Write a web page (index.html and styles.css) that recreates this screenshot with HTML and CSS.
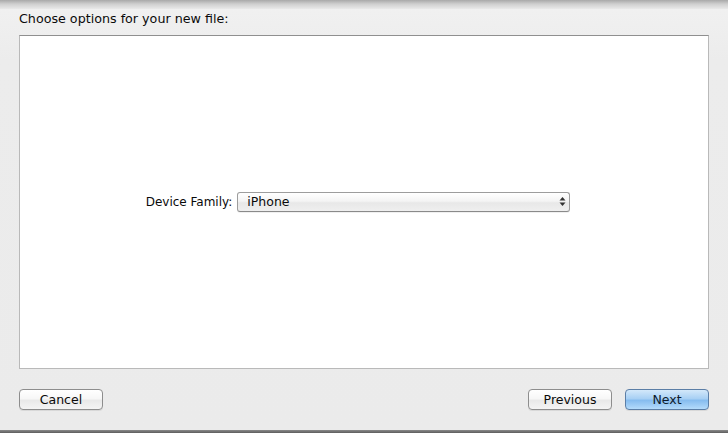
FILE: index.html
```html
<!DOCTYPE html>
<html lang="en">
<head>
    <meta charset="UTF-8">
    <title>Choose options</title>
    <link rel="stylesheet" href="styles.css">
</head>
<body>
<div class="sheet">
    <div class="sheet-shadow"></div>
    <h1 class="title">Choose options for your new file:</h1>
    <main class="panel">
        <form class="options" onsubmit="return false">
            <label for="device_family">Device Family:</label>
            <div class="popup">
                <select id="device_family" name="device_family">
                    <option>iPhone</option>
                    <option>iPad</option>
                    <option>Universal</option>
                </select>
                <span class="stepper">
                    <svg width="7" height="11" viewBox="0 0 7 11">
                        <path d="M3.5 1 L6.5 4.5 L0.5 4.5 Z" fill="#333"/>
                        <path d="M3.5 10 L6.5 6.5 L0.5 6.5 Z" fill="#333"/>
                    </svg>
                </span>
            </div>
        </form>
    </main>
    <footer class="buttons">
        <button class="btn">Cancel</button>
        <span class="spacer"></span>
        <button class="btn">Previous</button>
        <button class="btn btn-default">Next</button>
    </footer>
    <div class="window-edge"></div>
</div>
</body>
</html>
```

FILE: styles.css
```css
html {
    background-color: #ececec;
    color: #111;
    font-family: "DejaVu Sans", "Liberation Sans", sans-serif;
    font-size: 12px;
    height: 100%;
}

body {
    margin: 0;
    height: 100%;
}

.sheet {
    display: flex;
    flex-direction: column;
    height: 433px;
    background: linear-gradient(to bottom, #f1f1f1 0, #ececec 60px, #ebebeb 100%);
}

.sheet-shadow {
    height: 9px;
    flex: none;
    background: linear-gradient(to bottom, #a9a9a9 0, #cfcfcf 4px, #e9e9e9 9px);
}

.title {
    margin: 3px 0 0 19px;
    height: 23px;
    font-size: 12.7px;
    font-weight: normal;
    line-height: 14px;
    color: #0a0a0a;
}

.panel {
    height: 332px;
    margin: 0 19px;
    background: white;
    border: 1px solid #b9b9b9;
    border-top-color: #8f8f8f;
    display: flex;
    align-items: center;
    justify-content: center;
}

.options {
    display: flex;
    align-items: center;
    gap: 5px;
    margin: 0 12px 1px 0;
}

.options label {
    font-size: 12px;
    color: #0a0a0a;
}

.popup {
    position: relative;
    width: 333px;
    height: 20px;
}

.popup select {
    appearance: none;
    -webkit-appearance: none;
    width: 100%;
    height: 100%;
    margin: 0;
    padding: 0 0 0 9px;
    border: 1px solid #9d9d9d;
    border-bottom-color: #8a8a8a;
    border-radius: 3px;
    font-family: inherit;
    font-size: 12.5px;
    color: #0a0a0a;
    background: linear-gradient(to bottom, #ffffff 0, #f4f4f4 45%, #e8e8e8 55%, #efefef 100%);
    box-shadow: 0 1px 0 rgba(0, 0, 0, 0.06);
}

.stepper {
    position: absolute;
    right: 4px;
    top: 4px;
    pointer-events: none;
}

.buttons {
    display: flex;
    gap: 13px;
    padding: 0 19px;
    margin-top: 20px;
}

.spacer {
    flex: 1 1 auto;
}

.btn {
    width: 84px;
    height: 21px;
    padding: 0;
    border: 1px solid #8d8d8d;
    border-radius: 4px;
    font-family: inherit;
    font-size: 12.5px;
    color: #0a0a0a;
    background: linear-gradient(to bottom, #ffffff 0, #f7f7f7 45%, #e9e9e9 55%, #f4f4f4 100%);
    box-shadow: 0 1px 0 rgba(0, 0, 0, 0.08);
}

.btn-default {
    border-color: #5b7ea6;
    color: #0e1a2a;
    background: linear-gradient(to bottom, #d3e8fa 0, #a8d0f4 45%, #86bcef 55%, #b4dbfb 100%);
}

.window-edge {
    margin-top: auto;
    height: 3px;
    background: linear-gradient(to bottom, #8a8a8a 0, #5d5d5d 100%);
}
```
